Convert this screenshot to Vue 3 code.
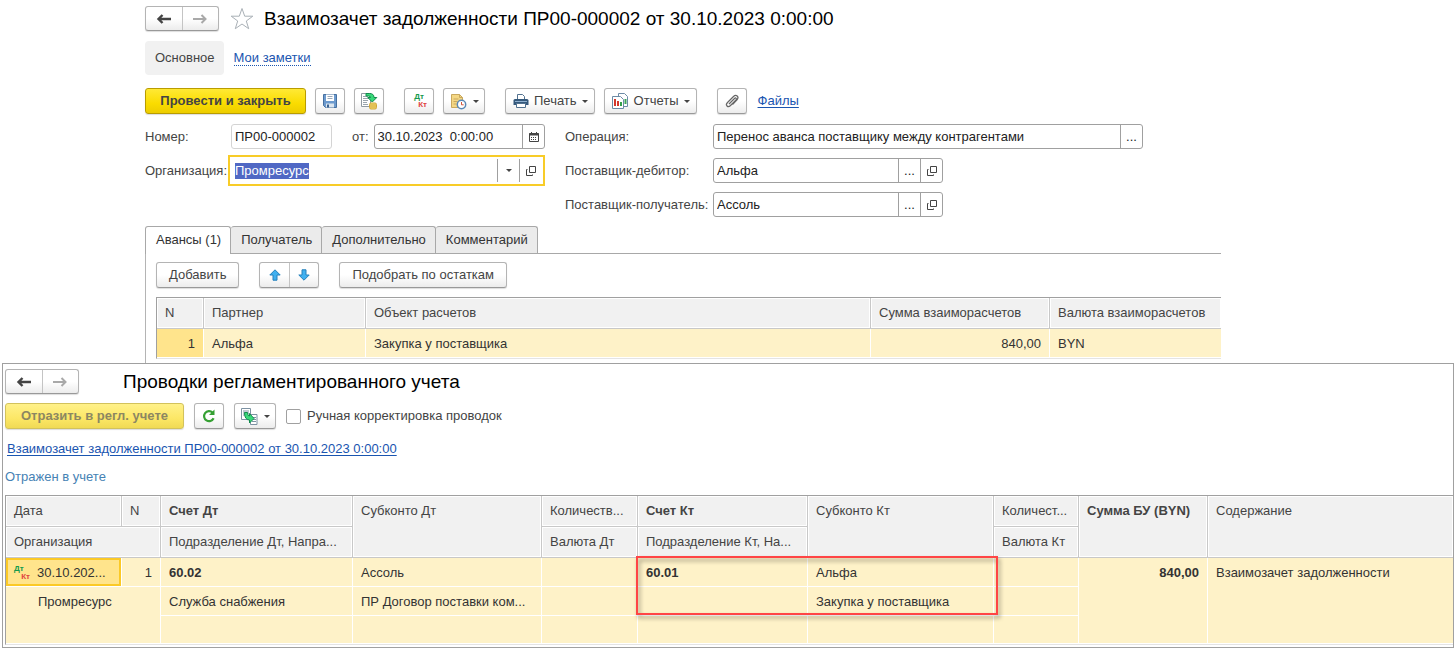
<script setup>
import { onMounted, ref } from 'vue'

const organization = ref(null)

const tabs = ['Авансы (1)', 'Получатель', 'Дополнительно', 'Комментарий']

onMounted(() => {
  organization.value.focus()
  organization.value.select()
})
</script>

<template>
  <main class="screen">
    <section class="document">
      <header class="title-row">
        <div class="nav">
          <button type="button" aria-label="Назад">
            <svg width="16" height="12" viewBox="0 0 16 12"><path d="M6.500 2 2.500 6l4 4M3 6h12" fill="none" stroke="#444" stroke-width="2.400" /></svg>
          </button>
          <button type="button" aria-label="Вперед">
            <svg width="16" height="12" viewBox="0 0 16 12"><path d="M9.500 2l4 4-4 4M13 6H1" fill="none" stroke="#a9a9a9" stroke-width="2" /></svg>
          </button>
        </div>
        <button type="button" class="star" aria-label="В избранное">
          <svg width="24" height="24" viewBox="0 0 24 24"><path d="M12 1.500 14.700 9.200H22.800L16.300 14 18.700 21.700 12 17 5.300 21.700 7.700 14 1.200 9.200H9.300z" fill="#fff" stroke="#a9b0b6" /></svg>
        </button>
        <h1>Взаимозачет задолженности ПР00-000002 от 30.10.2023 0:00:00</h1>
      </header>

      <nav class="sections">
        <span class="current">Основное</span>
        <a href="#notes" class="dotted">Мои заметки</a>
      </nav>

      <div class="toolbar">
        <button type="button" class="btn primary post">Провести и закрыть</button>
        <button type="button" class="btn icon" aria-label="Записать">
          <svg width="16" height="16" viewBox="0 0 16 16">
            <path d="M1.500 1.500h13v13h-11l-2-2z" fill="#6c9ace" stroke="#47709f" />
            <path d="M4 1.500h8V8H4z" fill="#fff" /><path d="M5.500 3.500h5M5.500 5.500h5" stroke="#9aa8b8" />
            <path d="M4 10.500h8v4H4z" fill="#dce6ef" /><path d="M5 11.500h2v3H5z" fill="#3a618f" />
          </svg>
        </button>
        <button type="button" class="btn icon" aria-label="Провести">
          <svg width="18" height="18" viewBox="0 0 18 18">
            <path d="M1.500 1.500h9v13h-9z" fill="#fff" stroke="#909aa2" />
            <path d="M3 4.500h5M3 6.500h6M3 8.500h5M3 10.500h4M3 12.500h5" stroke="#9aa5ae" />
            <rect x="9.500" y="11" width="7" height="6" rx="1.500" fill="#f6dc72" stroke="#d0a63a" /><path d="M10 13h6M10 15h6" stroke="#d0a63a" />
            <path d="M6 1.500h3.500q4.500 0 4.500 4h2.800L12.300 10 7.800 5.500h2.700q0-1.500-2-1.500H6z" fill="#38d979" stroke="#128a4c" />
          </svg>
        </button>
        <button type="button" class="btn icon apart" aria-label="Проводки Дт Кт">
          <span class="dtkt"><i>Дт</i><b>Кт</b></span>
        </button>
        <button type="button" class="btn icon wide" aria-label="Структура подчиненности">
          <svg width="17" height="17" viewBox="0 0 17 17">
            <path d="M1.500 1.500h8l3 3v10h-11z" fill="#f4d784" stroke="#c9a85e" /><path d="M9.500 1.500v3h3M3.500 6h5M3.500 8.500h4M3.500 11h3" fill="none" stroke="#c9a85e" />
            <circle cx="11.500" cy="11.500" r="4.200" fill="#fff" stroke="#5b88b5" stroke-width="1.500" /><path d="M11.500 9v2.800h2.200" fill="none" stroke="#d2553c" />
          </svg>
          <span class="caret"></span>
        </button>
        <button type="button" class="btn apart print">
          <svg width="16" height="16" viewBox="0 0 16 16">
            <path d="M4.500 1.500h5l2 2v4h-7z" fill="#fff" stroke="#51718f" />
            <path d="M2 6h12q1.500 0 1.500 1.500V12H.5V7.500Q.5 6 2 6z" fill="#35597c" />
            <path d="M2 8.500h12" stroke="#8fb0cf" /><path d="M3.500 10.500h9v4h-9z" fill="#fff" stroke="#51718f" />
          </svg>
          <span>Печать</span><span class="caret"></span>
        </button>
        <button type="button" class="btn print">
          <svg width="17" height="17" viewBox="0 0 17 17">
            <path d="M6.500.5h6l3 3v10h-9z" fill="#fff" stroke="#6d8ba6" /><path d="M13.500 6v5" stroke="#3ba65a" stroke-width="2" />
            <path d="M.5 3.500h8l3 3v9H.5z" fill="#fff" stroke="#6d8ba6" />
            <path d="M3 6v7" stroke="#d3372c" stroke-width="2" /><path d="M6 8v5" stroke="#d3372c" stroke-width="2" /><path d="M9 9v4" stroke="#35a04b" stroke-width="2" />
          </svg>
          <span>Отчеты</span><span class="caret"></span>
        </button>
        <button type="button" class="btn icon apart" aria-label="Вложения">
          <svg width="16" height="16" viewBox="0 0 16 16"><path d="M5 11 10.500 5.500q1-1 1.700-.2t-.2 1.700L6.500 12.500Q4.500 14.500 3 13t.5-3.500L9.500 3.500q2-2 3.700-.5t-.2 3.900L8.500 11.500" fill="none" stroke="#666" stroke-width="1.200" /></svg>
        </button>
        <a href="#files" class="files">Файлы</a>
      </div>

      <form class="fields" @submit.prevent>
        <div class="column left">
          <div class="line">
            <label for="number" class="caption">Номер:</label>
            <span class="field soft number"><input id="number" value="ПР00-000002"></span>
            <label for="date" class="from">от:</label>
            <span class="field date">
              <input id="date" value="30.10.2023  0:00:00">
              <button type="button" aria-label="Календарь">
                <svg width="10" height="10" viewBox="0 0 10 10"><path d="M.5 1.500h9v8h-9z" fill="none" stroke="#444" /><path d="M0 2.500h10" stroke="#444" stroke-width="2" /><path d="M2.500 0v2M7.500 0v2" stroke="#444" /><path d="M2 5.500h6M2 7.500h6" stroke="#444" stroke-dasharray="1 1" /></svg>
              </button>
            </span>
          </div>
          <div class="line">
            <label for="organization" class="caption">Организация:</label>
            <span class="field focused">
              <input id="organization" ref="organization" value="Промресурс">
              <button type="button" aria-label="Выбрать из списка"><span class="caret"></span></button>
              <button type="button" aria-label="Открыть организацию">
                <svg width="10" height="10" viewBox="0 0 10 10"><path d="M3.500.5h6v6h-6zM1.500 3.500h-1v6h6v-1" fill="none" stroke="#444" /></svg>
              </button>
            </span>
          </div>
        </div>
        <div class="column">
          <div class="line">
            <label for="operation" class="caption long">Операция:</label>
            <span class="field operation">
              <input id="operation" value="Перенос аванса поставщику между контрагентами">
              <button type="button" aria-label="Выбрать операцию">...</button>
            </span>
          </div>
          <div class="line">
            <label for="debtor" class="caption long">Поставщик-дебитор:</label>
            <span class="field supplier">
              <input id="debtor" value="Альфа">
              <button type="button" aria-label="Выбрать дебитора">...</button>
              <button type="button" aria-label="Открыть дебитора">
                <svg width="10" height="10" viewBox="0 0 10 10"><path d="M3.500.5h6v6h-6zM1.500 3.500h-1v6h6v-1" fill="none" stroke="#444" /></svg>
              </button>
            </span>
          </div>
          <div class="line">
            <label for="receiver" class="caption long">Поставщик-получатель:</label>
            <span class="field supplier">
              <input id="receiver" value="Ассоль">
              <button type="button" aria-label="Выбрать получателя">...</button>
              <button type="button" aria-label="Открыть получателя">
                <svg width="10" height="10" viewBox="0 0 10 10"><path d="M3.500.5h6v6h-6zM1.500 3.500h-1v6h6v-1" fill="none" stroke="#444" /></svg>
              </button>
            </span>
          </div>
        </div>
      </form>

      <div class="tabs" role="tablist">
        <button v-for="(tab, i) in tabs" :key="tab" type="button" role="tab" :aria-selected="i === 0" :class="{ active: i === 0 }">{{ tab }}</button>
      </div>

      <div class="panel">
        <div class="commands">
          <button type="button" class="btn">Добавить</button>
          <div class="pair">
            <button type="button" aria-label="Переместить вверх">
              <svg width="12" height="12" viewBox="0 0 12 12"><path d="M6 .8 11.200 6H8v5.200H4V6H.8z" fill="#3fb0f0" stroke="#2680bb" /></svg>
            </button>
            <button type="button" aria-label="Переместить вниз">
              <svg width="12" height="12" viewBox="0 0 12 12"><path d="M6 11.200 11.200 6H8V.8H4V6H.8z" fill="#3fb0f0" stroke="#2680bb" /></svg>
            </button>
          </div>
          <button type="button" class="btn">Подобрать по остаткам</button>
        </div>
        <table class="grid advances">
          <colgroup><col class="a-n"><col class="a-partner"><col><col class="a-sum"><col class="a-currency"></colgroup>
          <thead>
            <tr><th>N</th><th>Партнер</th><th>Объект расчетов</th><th>Сумма взаиморасчетов</th><th>Валюта взаиморасчетов</th></tr>
          </thead>
          <tbody>
            <tr><td class="num picked">1</td><td>Альфа</td><td>Закупка у поставщика</td><td class="num">840,00</td><td>BYN</td></tr>
          </tbody>
        </table>
      </div>
    </section>

    <section class="postings">
      <header class="title-row">
        <div class="nav">
          <button type="button" aria-label="Назад">
            <svg width="16" height="12" viewBox="0 0 16 12"><path d="M6.500 2 2.500 6l4 4M3 6h12" fill="none" stroke="#444" stroke-width="2.400" /></svg>
          </button>
          <button type="button" aria-label="Вперед">
            <svg width="16" height="12" viewBox="0 0 16 12"><path d="M9.500 2l4 4-4 4M13 6H1" fill="none" stroke="#a9a9a9" stroke-width="2" /></svg>
          </button>
        </div>
        <h2>Проводки регламентированного учета</h2>
      </header>

      <div class="toolbar second">
        <button type="button" class="btn primary reflect" disabled>Отразить в регл. учете</button>
        <button type="button" class="btn icon" aria-label="Обновить">
          <svg width="16" height="16" viewBox="0 0 16 16"><path d="M12.600 10.300A5 5 0 1 1 11.500 4.500" fill="none" stroke="#35a033" stroke-width="2.200" /><path d="M13.500 1.500v5.500H8z" fill="#35a033" /></svg>
        </button>
        <button type="button" class="btn icon wide" aria-label="Заполнить">
          <svg width="17" height="17" viewBox="0 0 17 17">
            <path d="M.5.5h9v11h-9z" fill="#fff" stroke="#7d92a3" /><path d="M2 3h6M2 5h6M2 7h3" stroke="#7d92a3" />
            <path d="M9.500 6.500h6.500v10H9.500z" fill="#fff" stroke="#7d92a3" /><path d="M12 9.500h3M12 11.500h3M11 13.500h4" stroke="#7d92a3" />
            <path d="M3.500 4.500h3q0 3.500 2 3.500V5.500l4.500 5-4.500 4.500v-3Q3.500 12 3.500 4.500z" fill="#38d979" stroke="#128a4c" />
          </svg>
          <span class="caret"></span>
        </button>
        <label class="check"><input type="checkbox"><span>Ручная корректировка проводок</span></label>
      </div>

      <a href="#document" class="source">Взаимозачет задолженности ПР00-000002 от 30.10.2023 0:00:00</a>
      <p class="status">Отражен в учете</p>

      <div class="ledger-wrap">
        <table class="grid ledger">
          <colgroup>
            <col class="l-date"><col class="l-n"><col class="l-dt"><col class="l-sub-dt"><col class="l-qty-dt">
            <col class="l-kt"><col class="l-sub-kt"><col class="l-qty-kt"><col class="l-sum"><col>
          </colgroup>
          <thead>
            <tr>
              <th>Дата</th><th>N</th><th class="strong">Счет Дт</th><th rowspan="2">Субконто Дт</th><th>Количеств...</th>
              <th class="strong">Счет Кт</th><th rowspan="2">Субконто Кт</th><th>Количест...</th>
              <th rowspan="2" class="strong">Сумма БУ (BYN)</th><th rowspan="2">Содержание</th>
            </tr>
            <tr>
              <th colspan="2">Организация</th><th>Подразделение Дт, Напра...</th><th>Валюта Дт</th>
              <th>Подразделение Кт, На...</th><th>Валюта Кт</th>
            </tr>
          </thead>
          <tbody>
            <tr>
              <td class="picked framed"><div class="date-cell"><span class="dtkt"><i>Дт</i><b>Кт</b></span><span>30.10.202...</span></div></td>
              <td class="num">1</td><td class="strong">60.02</td><td>Ассоль</td><td></td>
              <td class="strong">60.01</td><td>Альфа</td><td></td>
              <td rowspan="3" class="num strong">840,00</td><td rowspan="3">Взаимозачет задолженности</td>
            </tr>
            <tr>
              <td colspan="2" rowspan="2" class="indent">Промресурс</td><td>Служба снабжения</td>
              <td>ПР Договор поставки ком...</td><td></td><td></td><td>Закупка у поставщика</td><td></td>
            </tr>
            <tr class="blank"><td></td><td></td><td></td><td></td><td></td><td></td></tr>
          </tbody>
        </table>
        <div class="highlight"></div>
      </div>
    </section>
  </main>
</template>

<style>
body {
  margin: 0;
  background: #fff;
}
</style>

<style scoped>
.screen {
  font: 13px/16px "Liberation Sans", Arial, sans-serif;
  color: #444;
}

.screen * {
  box-sizing: border-box;
}

button,
input {
  font: inherit;
  color: inherit;
  margin: 0;
}

button {
  display: inline-flex;
  align-items: center;
  justify-content: center;
  padding: 0;
  background: none;
  border: 0;
  white-space: nowrap;
}

svg {
  display: block;
  flex: none;
}

a {
  color: #1a55b0;
  text-underline-offset: 2px;
}

.document {
  padding: 6px 233px 0 145px;
}

.title-row {
  display: flex;
  align-items: center;
}

h1,
h2 {
  margin: 0;
  font-size: 19px;
  line-height: 24px;
  font-weight: 400;
  color: #000;
  white-space: nowrap;
}

.nav,
.pair {
  display: flex;
  border: 1px solid #b4b4b4;
  border-bottom-color: #999;
  border-radius: 3px;
  background: linear-gradient(#fff 50%, #ececec);
  box-shadow: 0 1px 1px #ddd;
}

.nav {
  width: 74px;
  height: 25px;
}

.nav button,
.pair button {
  flex: 1;
}

.nav button + button,
.pair button + button {
  border-left: 1px solid #c4c4c4;
}

.star {
  margin: 0 10px 0 11px;
}

.sections {
  display: flex;
  align-items: center;
  gap: 10px;
  margin-top: 10px;
}

.current {
  padding: 9px 9px 9px 10px;
  border-radius: 4px;
  background: #f1f1f1;
}

.dotted {
  text-decoration: none;
  border-bottom: 1px dotted #1a55b0;
  line-height: 14px;
}

.toolbar {
  display: flex;
  align-items: center;
  gap: 9px;
  margin-top: 13px;
}

.btn {
  height: 26px;
  padding: 0 12px;
  border: 1px solid #b4b4b4;
  border-bottom-color: #999;
  border-radius: 3px;
  background: linear-gradient(#fff 50%, #ececec);
  box-shadow: 0 1px 1px #ddd;
}

.primary {
  border-color: #b99c00;
  background: linear-gradient(#ffe935, #fadc00 60%, #edcd00);
  font-weight: 700;
}

.post {
  width: 161px;
}

.reflect {
  width: 179px;
  color: #8c8762;
  border-color: #d2c25c;
  background: linear-gradient(#fff18a, #fce766 60%, #f0da55);
}

.icon {
  width: 30px;
  padding: 0;
}

.wide {
  width: 42px;
  gap: 6px;
}

.print {
  padding: 0 6px 0 7px;
  gap: 5px;
}

.apart {
  margin-left: 11px;
}

.caret {
  border: 3px solid transparent;
  border-top-color: #444;
  border-bottom-width: 0;
}

.files {
  margin-left: 2px;
}

.dtkt {
  display: flex;
  flex-direction: column;
  width: 16px;
  font: 700 8px/8px "Liberation Sans", Arial, sans-serif;
}

.dtkt i {
  font-style: normal;
  color: #149a4c;
}

.dtkt b {
  align-self: flex-end;
  color: #e0433f;
}

.fields {
  display: flex;
  gap: 20px;
  margin-top: 10px;
}

.column {
  display: flex;
  flex-direction: column;
  gap: 9px;
  flex: 1;
  min-width: 0;
}

.left {
  flex: 0 0 400px;
}

.line {
  display: flex;
  align-items: center;
}

.caption {
  width: 86px;
  flex: none;
  white-space: nowrap;
}

.long {
  width: 148px;
}

.from {
  margin: 0 5px 0 20px;
}

.field {
  display: flex;
  min-width: 0;
  height: 25px;
  border: 1px solid #a0a0a0;
  border-radius: 3px;
  color: #222;
}

.field input {
  flex: 1;
  min-width: 0;
  padding: 0 3px;
  border: 0;
  outline: 0;
  background: none;
  white-space: pre;
}

.field input::selection {
  color: #fff;
  background: #5068c4;
}

.field button {
  width: 22px;
  flex: none;
  border-left: 1px solid #a0a0a0;
}

.soft {
  border-color: #d4d4d4;
}

.number {
  width: 101px;
}

.date {
  flex: 1;
}

.focused {
  flex: 1;
  margin-right: 3px;
  border-color: transparent;
  border-radius: 0;
  outline: 2px solid #f8cc28;
  outline-offset: 1px;
}

.operation {
  width: 430px;
}

.supplier {
  width: 230px;
}

.tabs {
  display: flex;
  margin-top: 9px;
  border-bottom: 1px solid #a8a8a8;
}

.tabs button {
  height: 27px;
  padding: 0 9px 0 10px;
  border: 1px solid #a8a8a8;
  border-bottom: 0;
  border-left-width: 0;
  border-radius: 3px 3px 0 0;
  background: #ebebeb;
  color: #333;
}

.tabs .active {
  height: 28px;
  margin-bottom: -1px;
  padding-bottom: 1px;
  border-left-width: 1px;
  background: #fff;
}

.panel {
  padding: 8px 0 4px 10px;
  border-left: 1px solid #b4b4b4;
}

.commands {
  display: flex;
  gap: 20px;
  margin-bottom: 9px;
}

.pair {
  width: 60px;
}

.grid {
  width: 100%;
  table-layout: fixed;
  border-collapse: separate;
  border-spacing: 0;
  border-top: 1px solid #a0a0a0;
  border-left: 1px solid #a0a0a0;
  border-bottom: 1px solid #e4e4e4;
}

.grid th,
.grid td {
  height: 29px;
  padding: 7px 8px 5px;
  overflow: hidden;
  text-align: left;
  vertical-align: top;
  white-space: nowrap;
  font-weight: 400;
}

.grid th {
  height: 31px;
  padding: 7px 8px;
  border-right: 1px solid #c8c8c8;
  border-bottom: 1px solid #c8c8c8;
  background: #f1f1f1;
  box-shadow: inset 0 0 0 1px #fff;
}

.grid td {
  border-right: 1px solid #fff;
  border-bottom: 1px solid #fff;
  background: #fef2c8;
  color: #333;
}

.grid .blank td {
  height: 28px;
}

.grid tr:first-child > :last-child {
  border-right: 0;
}

.grid .num {
  text-align: right;
}

.grid .strong {
  font-weight: 700;
}

.grid .picked {
  background: #ffe48c;
}

.a-n {
  width: 47px;
}

.a-partner {
  width: 162px;
}

.a-sum {
  width: 179px;
}

.a-currency {
  width: 171px;
}

.postings {
  margin: 0 0 0 2px;
  padding: 5px 0 2px 2px;
  border: 1px solid #a0a0a0;
}

.postings h2 {
  margin-left: 44px;
}

.second {
  gap: 10px;
  margin-top: 9px;
}

.check {
  display: flex;
  align-items: center;
  gap: 6px;
}

.check input {
  appearance: none;
  width: 15px;
  height: 15px;
  margin: 0;
  border: 1px solid #a0a0a0;
  border-radius: 2px;
  background: #fff;
}

.source {
  display: block;
  width: max-content;
  margin: 12px 0 0 2px;
}

.status {
  margin: 12px 0 10px;
  color: #4682b4;
}

.ledger-wrap {
  position: relative;
}

.l-date {
  width: 116px;
}

.l-n {
  width: 39px;
}

.l-dt {
  width: 192px;
}

.l-sub-dt {
  width: 189px;
}

.l-qty-dt {
  width: 96px;
}

.l-kt {
  width: 170px;
}

.l-sub-kt {
  width: 186px;
}

.l-qty-kt {
  width: 85px;
}

.l-sum {
  width: 129px;
}

.grid .framed {
  box-shadow: inset 0 0 0 2px #fbc926;
}

.date-cell {
  display: flex;
  gap: 7px;
}

.grid .indent {
  padding-left: 32px;
}

.highlight {
  position: absolute;
  top: 61px;
  left: 631px;
  width: 362px;
  height: 59px;
  border: 2px solid #ff4545;
  filter: drop-shadow(2px 3px 2px #0006);
  pointer-events: none;
}
</style>
